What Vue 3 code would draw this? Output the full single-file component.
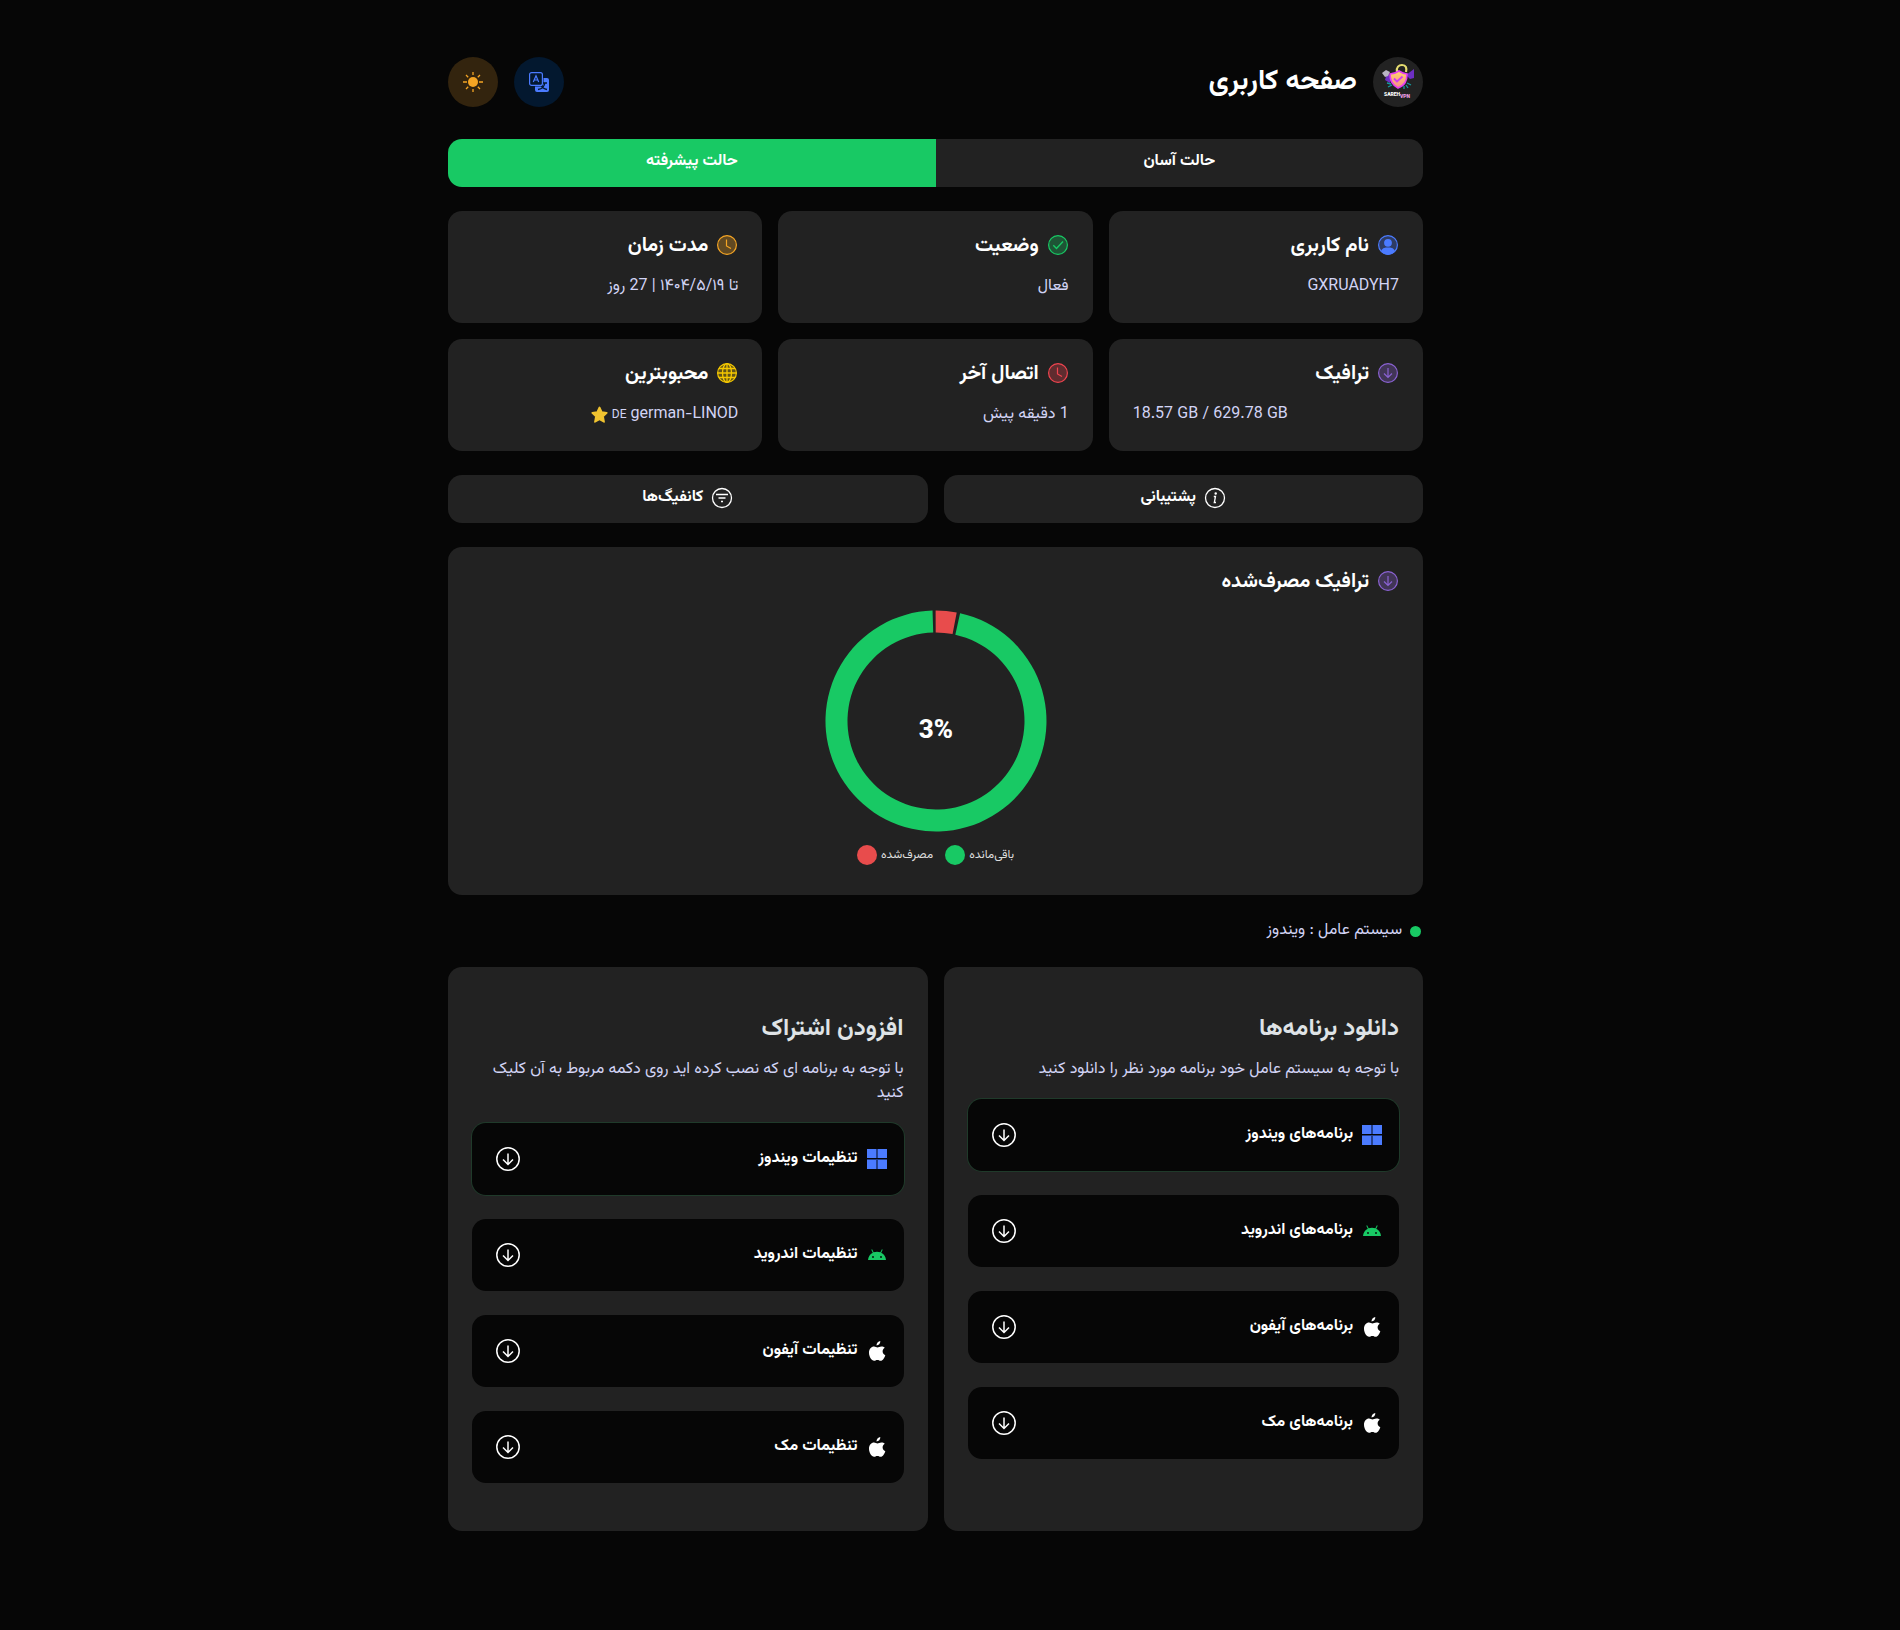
<script setup>
import { ref } from 'vue'

const mode = ref('advanced')

const stats = [
  { icon: 'user', color: '#4b7bff', title: 'نام کاربری', value: 'GXRUADYH7' },
  { icon: 'check', color: '#18c964', title: 'وضعیت', value: 'فعال' },
  { icon: 'clock', color: '#f5a524', title: 'مدت زمان', value: 'تا ۱۴۰۴/۵/۱۹ | 27 روز' },
  { icon: 'down', color: '#8a62d2', title: 'ترافیک', value: '18.57 GB / 629.78 GB', ltr: true },
  { icon: 'clock', color: '#f0444f', title: 'اتصال آخر', value: '1 دقیقه پیش' },
  { icon: 'globe', color: '#f5c800', title: 'محبوبترین', value: 'german-LINOD', flag: 'DE' },
]

const panels = [
  {
    title: 'دانلود برنامه‌ها',
    text: 'با توجه به سیستم عامل خود برنامه مورد نظر را دانلود کنید',
    items: [
      { os: 'windows', label: 'برنامه‌های ویندوز' },
      { os: 'android', label: 'برنامه‌های اندروید' },
      { os: 'apple', label: 'برنامه‌های آیفون' },
      { os: 'apple', label: 'برنامه‌های مک' },
    ],
  },
  {
    title: 'افزودن اشتراک',
    text: 'با توجه به برنامه ای که نصب کرده اید روی دکمه مربوط به آن کلیک کنید',
    items: [
      { os: 'windows', label: 'تنظیمات ویندوز' },
      { os: 'android', label: 'تنظیمات اندروید' },
      { os: 'apple', label: 'تنظیمات آیفون' },
      { os: 'apple', label: 'تنظیمات مک' },
    ],
  },
]

/* Ring segment between two angles, measured clockwise from the top. */
function segment(from, to) {
  const point = (r, deg) => {
    const a = (deg * Math.PI) / 180
    return `${(112 + r * Math.sin(a)).toFixed(2)} ${(112 - r * Math.cos(a)).toFixed(2)}`
  }
  const large = to - from > 180 ? 1 : 0
  return `M${point(110.5, from)}A110.5 110.5 0 ${large} 1 ${point(110.5, to)}L${point(88.5, to)}A88.5 88.5 0 ${large} 0 ${point(88.5, from)}Z`
}
const used = segment(-0.2, 10.8)
const left = segment(12.6, 358.2)
</script>

<template>
  <div class="page" dir="rtl" lang="fa">
    <main class="container">
      <header class="header">
        <div class="brand">
          <span class="logo">
            <svg viewBox="0 0 50 50" width="50" height="50" aria-hidden="true">
              <defs>
                <linearGradient id="shield" x1="0" y1="0" x2="0" y2="1">
                  <stop offset="0" stop-color="#ffd76a" />
                  <stop offset="1" stop-color="#f78a8c" />
                </linearGradient>
              </defs>
              <path d="M14 16l5 4-2 6-5-3zM41 12v9l-4 1-4-4z" fill="#6d2fc4" />
              <path d="M9 16l4-3 4 2-2 4-3 1z" fill="#b9b4c4" />
              <path d="M14 26l4 1M15 30l4-2M34 26l4 2M33 28l2 3M31 29v3" fill="none" stroke="#159aa0" stroke-width="1.300" />
              <path d="M24 15c-1-5 2-7 5-7 4 0 5 3 4 7" fill="none" stroke="#e5dc70" stroke-width="2.200" />
              <path d="M17 17c4 0 6-1 9-3 3 2 5 3 8 3 0 7-2 11-9 14-6-3-8-7-8-14z" fill="url(#shield)" stroke="#e43ff0" stroke-width="1.600" />
              <path d="M21 21.500l3 3 5.500-5" fill="none" stroke="#d33df0" stroke-width="1.800" />
              <text x="11" y="39" class="logo-a">SAREH</text>
              <text x="27" y="41" class="logo-b">VPN</text>
            </svg>
          </span>
          <h1>صفحه کاربری</h1>
        </div>
        <div class="actions">
          <button class="round lang" aria-label="زبان">
            <svg viewBox="0 0 20 20" width="20" height="20">
              <path d="M14.500 6H18a2 2 0 0 1 2 2v10a2 2 0 0 1-2 2H8a2 2 0 0 1-2-2v-3.500h6.500a2 2 0 0 0 2-2z" fill="#4b7bff" />
              <path d="M9 17.500c4-.5 6.500-3 7-7M12 13c1 2.500 3 4 6 4.500M13.500 11H18" fill="none" stroke="#03182f" stroke-width="1.300" />
              <rect x=".6" y=".6" width="12.800" height="12.800" rx="2" fill="#03182f" stroke="#4b7bff" stroke-width="1.200" />
              <path d="M4.300 10L7 3.800 9.700 10M5.200 8h3.600" fill="none" stroke="#4b7bff" stroke-width="1.200" />
            </svg>
          </button>
          <button class="round theme" aria-label="پوسته">
            <svg viewBox="0 0 20 20" width="20" height="20">
              <circle cx="10" cy="10" r="5" fill="#f5a524" />
              <path d="M10 0v3M10 17v3M0 10h4M16 10h4M3 3l2.200 2.200M14.800 14.800L17 17M17 3l-2.200 2.200M5.200 14.800L3 17" stroke="#f5a524" stroke-width="1.300" />
            </svg>
          </button>
        </div>
      </header>

      <nav class="tabs">
        <button :class="{ on: mode === 'easy' }" @click="mode = 'easy'">حالت آسان</button>
        <button :class="{ on: mode === 'advanced' }" @click="mode = 'advanced'">حالت پیشرفته</button>
      </nav>

      <section class="stats">
        <article v-for="s in stats" :key="s.title" class="card">
          <h2 class="card-title">
            <svg viewBox="0 0 20 20" width="20" height="20" :style="{ color: s.color }" fill="none" stroke="currentColor">
              <circle cx="10" cy="10" r="9.400" fill="currentColor" fill-opacity=".3" stroke-width="1.200" />
              <g v-if="s.icon === 'user'" fill="currentColor" stroke="none">
                <circle cx="10" cy="7.800" r="3.900" />
                <path d="M3 16c2-3.500 4-3.500 7-3.500s5 0 7 3.500c-3.500 5-10.500 5-14 0z" />
              </g>
              <path v-else-if="s.icon === 'check'" d="M5.300 10.300l3.200 3.200L15 6.500" stroke-width="1.400" />
              <path v-else-if="s.icon === 'clock'" d="M9.500 4.500V11l4.500 2.500" stroke-width="1.200" />
              <path v-else-if="s.icon === 'down'" d="M10 5v9.500M6 10.500l4 4 4-4" stroke-width="1.200" />
              <g v-else stroke-width="1.300">
                <ellipse cx="10" cy="10" rx="4.500" ry="9.400" />
                <path d="M10 .6v18.800M.6 10h18.800M2 5.500h16M2 14.500h16" />
              </g>
            </svg>
            {{ s.title }}
          </h2>
          <p class="muted" :class="{ ltr: s.ltr }">
            {{ s.value }}
            <template v-if="s.flag">
              <small class="flag">{{ s.flag }}</small>
              <svg viewBox="0 0 17 18" width="17" height="18">
                <path d="M8.500 1.500l2.200 4.600 5 .7-3.700 3.500 1 5.500-4.500-2.500L4 15.800l1-5.500L1.300 6.800l5-.7z" fill="#f0c330" stroke="#f0c330" stroke-width="1.800" stroke-linejoin="round" />
              </svg>
            </template>
          </p>
        </article>
      </section>

      <section class="links">
        <button>
          <svg viewBox="0 0 22 22" width="22" height="22" fill="none" stroke="#fff" stroke-width="1.300">
            <circle cx="11" cy="11" r="9.500" />
            <path d="M9.800 9.500h1.700l-1.200 6H12" />
            <circle cx="11.700" cy="6.500" r=".6" fill="#fff" />
          </svg>
          پشتیبانی
        </button>
        <button>
          <svg viewBox="0 0 22 22" width="22" height="22" fill="none" stroke="#fff" stroke-width="1.300">
            <circle cx="11" cy="11" r="9.500" />
            <path d="M5 7.500h12M7.500 11h7M10 14.500h2" />
          </svg>
          کانفیگ‌ها
        </button>
      </section>

      <section class="card chart">
        <h2 class="card-title">
          <svg viewBox="0 0 20 20" width="20" height="20" fill="none" stroke="#8a62d2" stroke-width="1.200">
            <circle cx="10" cy="10" r="9.400" fill="#8a62d2" fill-opacity=".3" />
            <path d="M10 5v9.500M6 10.500l4 4 4-4" />
          </svg>
          ترافیک مصرف‌شده
        </h2>
        <svg class="donut" viewBox="0 0 224 224" width="224" height="224" role="img" aria-label="3%">
          <path :d="left" fill="#18c964" />
          <path :d="used" fill="#e84c4c" />
          <text x="112" y="129" text-anchor="middle" direction="ltr">3%</text>
        </svg>
        <ul class="legend">
          <li>باقی‌مانده<i class="dot-left"></i></li>
          <li>مصرف‌شده<i class="dot-used"></i></li>
        </ul>
      </section>

      <p class="muted os"><i></i>سیستم عامل : ویندوز</p>

      <section class="panels">
        <article v-for="p in panels" :key="p.title" class="card panel">
          <h2>{{ p.title }}</h2>
          <p class="muted">{{ p.text }}</p>
          <button v-for="(item, i) in p.items" :key="item.label" class="item" :class="{ active: i === 0 }">
            <svg v-if="item.os === 'windows'" viewBox="0 0 20 20" width="20" height="20">
              <path d="M0 0h20v20H0z" fill="#24408c" />
              <path d="M0 0h9v9H0zM11 0h9v9h-9zM0 11h9v9H0zM11 11h9v9h-9z" fill="#4b7bff" />
              <path d="M0 9h20v1H0z" fill="#060606" />
            </svg>
            <svg v-else-if="item.os === 'android'" viewBox="0 0 20 20" width="20" height="20">
              <path d="M1 15a9 9 0 0 1 4.800-7.300L4.300 4.700l.8-.4 1.500 3a9.500 9.500 0 0 1 6.800 0l1.500-3 .8.4-1.500 3A9 9 0 0 1 19 15z" fill="#18c964" />
              <circle cx="6" cy="12" r=".9" fill="#060606" />
              <circle cx="14" cy="12" r=".9" fill="#060606" />
            </svg>
            <svg v-else viewBox="0 0 20 20" width="20" height="20" fill="#fff">
              <path d="M13.300 0c.2 2.500-1.700 4.400-3.800 4.500C9.300 2.300 11.200.3 13.300 0z" />
              <path d="M17.800 6.800c-3.200 2-2.700 6 .5 7.400-.8 2.500-2.500 5.600-4.600 5.600-1.200 0-1.700-.8-3.300-.8s-2.100.8-3.300.8C4.500 19.800 2 15.500 2 11.800c0-3.800 2.400-6.200 5-6.200 1.500 0 2.400.9 3.500.9s2-1 4-1c1.300 0 2.500.5 3.300 1.300z" />
            </svg>
            <span>{{ item.label }}</span>
            <svg class="go" viewBox="0 0 24 24" width="24" height="24" fill="none" stroke="#fff" stroke-width="1.500">
              <circle cx="12" cy="12" r="11.200" />
              <path d="M12 6.500v11M7 12.500l5 5 5-5" />
            </svg>
          </button>
        </article>
      </section>
    </main>
  </div>
</template>

<style>
body {
  margin: 0;
  background: #060606;
}
</style>

<style scoped>
.page {
  padding-right: 29px;
  font-family: Vazirmatn, Roboto, "DejaVu Sans Condensed", "DejaVu Sans", sans-serif;
  font-size: 16px;
  line-height: 24px;
  color: #fff;
}
.container {
  box-sizing: border-box;
  max-width: 1023px;
  margin: 0 auto;
  padding: 57px 24px 96px;
  display: flex;
  flex-direction: column;
  gap: 24px;
}
h1, h2, p, ul { margin: 0; padding: 0; }
button {
  border: 0;
  padding: 0;
  font: inherit;
  color: inherit;
  cursor: pointer;
}
svg { display: block; flex: none; }
.header {
  display: flex;
  justify-content: space-between;
  margin-bottom: 8px;
}
.brand, .actions {
  display: flex;
  align-items: center;
  gap: 16px;
}
.logo {
  border-radius: 50%;
  background: #222;
}
.logo-a, .logo-b {
  direction: ltr;
  font-weight: 900;
  font-size: 5px;
  fill: #fff;
}
.logo-b { fill: #f0a0e8; }
h1 {
  font-size: 28px;
  line-height: 40px;
  font-weight: 700;
}
.round {
  width: 50px;
  height: 50px;
  border-radius: 50%;
  display: flex;
  align-items: center;
  justify-content: center;
}
.lang { background: #03182f; }
.theme { background: #33240e; }
.tabs {
  display: flex;
  border-radius: 14px;
  overflow: hidden;
}
.tabs button {
  flex: 1;
  height: 48px;
  background: #222;
  font-weight: 700;
  padding-bottom: 2px;
}
.tabs .on { background: #18c964; }
.stats {
  display: grid;
  grid-template-columns: repeat(3, 1fr);
  gap: 16px;
}
.card {
  background: #222;
  border-radius: 14px;
  padding: 24px;
}
.stats .card {
  padding-bottom: 22px;
}
.card-title {
  display: flex;
  gap: 9px;
  padding-right: 1px;
  font-size: 20px;
  line-height: 22px;
  font-weight: 700;
}
.stats .muted {
  display: flex;
  align-items: center;
  gap: 4px;
  margin: 18px 0 2px;
}
.muted { color: #d2d4f5; }
.ltr { direction: ltr; }
.flag { font-size: 12px; }
.links {
  display: grid;
  grid-template-columns: repeat(2, 1fr);
  gap: 16px;
}
.links button {
  height: 48px;
  display: flex;
  align-items: center;
  justify-content: center;
  gap: 8px;
  padding-bottom: 2px;
  border-radius: 14px;
  background: #222;
  font-weight: 700;
}
.chart {
  display: flex;
  flex-direction: column;
  padding-bottom: 30px;
}
.donut { margin: 16px auto 12px; }
.donut text {
  font-size: 26px;
  font-weight: 800;
  fill: #fff;
}
.legend {
  display: flex;
  justify-content: center;
  gap: 12px;
  list-style: none;
  font-size: 12px;
  line-height: 20px;
  color: #ddd;
}
.legend li {
  display: flex;
  gap: 4px;
}
.legend i {
  width: 20px;
  height: 20px;
  border-radius: 50%;
}
.dot-left { background: #18c964; }
.dot-used { background: #e84c4c; }
.os {
  display: flex;
  align-items: center;
  gap: 8px;
  padding-right: 2px;
}
.os i {
  width: 11px;
  height: 11px;
  border-radius: 50%;
  background: #18c964;
}
.panels {
  display: grid;
  grid-template-columns: repeat(2, 1fr);
  gap: 16px;
}
.panel {
  padding: 42px 24px 48px;
}
.panel h2 {
  font-size: 24px;
  line-height: 40px;
  font-weight: 700;
  color: #dfe3e6;
  margin-bottom: 9px;
}
.item {
  box-sizing: border-box;
  display: flex;
  align-items: center;
  gap: 9px;
  width: 100%;
  height: 72px;
  margin-top: 24px;
  padding: 0 17px 0 24px;
  border-radius: 14px;
  background: #060606;
  font-weight: 700;
}
.muted + .item { margin-top: 17px; }
.active { box-shadow: 0 0 0 1px #1f3a2a; }
.go { margin-right: auto; }
</style>
